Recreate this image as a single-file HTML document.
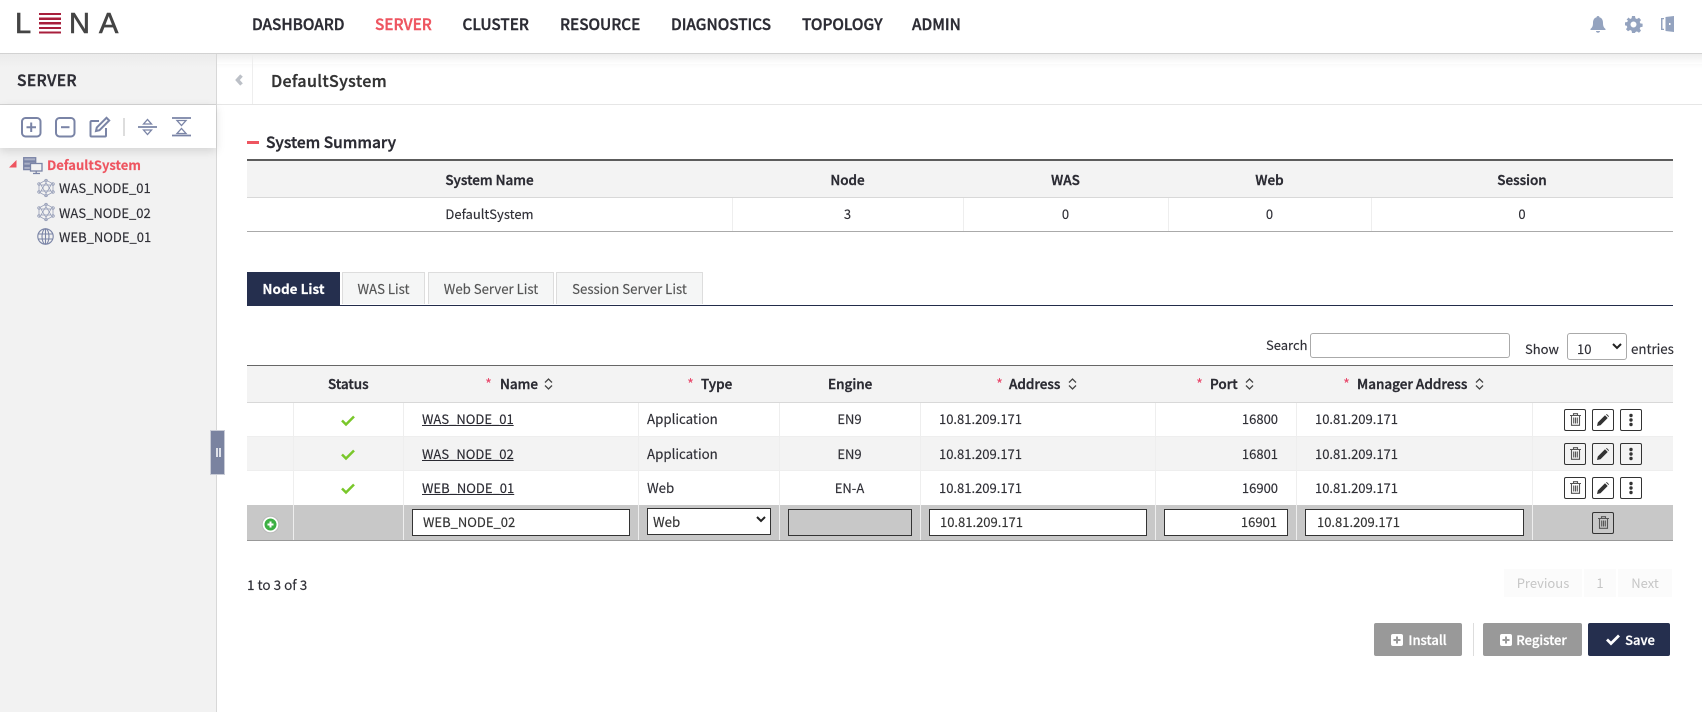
<!DOCTYPE html>
<html><head><meta charset="utf-8">
<style>
html,body{margin:0;padding:0;width:1702px;height:712px;overflow:hidden;background:#fff}
body{font-family:"Noto Sans CJK KR","Liberation Sans",sans-serif;font-size:13px;color:#2f2f36;position:relative;-webkit-text-stroke:.15px}
.a{position:absolute}
.t{position:absolute;white-space:nowrap;line-height:20px}
.c{text-align:center}
.b{font-weight:500;color:#2b2b33;font-size:13.5px;-webkit-text-stroke:.4px}
.nav{position:absolute;top:13px;font-size:15.3px;font-weight:500;color:#2c2c34;line-height:22px;white-space:nowrap;-webkit-text-stroke:.4px}
.vl{position:absolute;width:1px;background:#eee}
.tab{position:absolute;top:272px;height:31px;border:1px solid #ddd;border-bottom:0;background:#f5f6f6;text-align:center;line-height:31px;color:#555;box-sizing:content-box;font-size:13.2px}
.inp{position:absolute;box-sizing:border-box;background:#fff;border:1.5px solid #333;height:27px;line-height:23px;padding-left:10px;color:#333}
.ib{position:absolute;width:22px;height:22px;border:1px solid #333;border-radius:2px;box-sizing:border-box;background:transparent}
.btn{position:absolute;top:623px;height:33px;border-radius:2px;background:#999;color:#fff;font-weight:500;line-height:33px;text-align:center;white-space:nowrap;-webkit-text-stroke:.3px}
.pg{position:absolute;top:569px;height:28px;background:#fbfbfb;color:#c6c6c6;text-align:center;line-height:28px;-webkit-text-stroke:0}
a{color:#2b2b33;text-decoration:underline}
.star{color:#e8476a;font-size:15px;position:absolute;line-height:20px;top:375px;-webkit-text-stroke:0}
svg{position:absolute;display:block;overflow:visible}
.logo{position:absolute;top:5px;font-size:29px;line-height:38px;color:#444;font-family:'Liberation Sans',sans-serif;-webkit-text-stroke:.6px}
</style></head><body>

<!-- sidebar -->
<div class="a" style="left:0;top:54px;width:216px;height:658px;background:#f2f2f2;border-right:1px solid #d8d8d8"></div>
<div class="a" style="left:0;top:54px;width:1702px;height:14px;background:linear-gradient(#ebebeb,rgba(255,255,255,0))"></div>
<div class="a" style="left:217px;top:54px;width:1485px;height:10px;background:linear-gradient(#ededed,#fff)"></div>
<div class="a" style="left:0;top:104px;width:1702px;height:1px;background:#e6e6e6"></div>
<div class="a" style="left:0;top:104px;width:216px;height:1px;background:#d4d4d4"></div>
<div class="a" style="left:216px;top:54px;width:1px;height:658px;background:#d8d8d8"></div>
<div class="a" style="left:0;top:105px;width:216px;height:43px;background:#fff;box-shadow:0 3px 9px rgba(0,0,0,.13)"></div>

<!-- header -->
<div class="a" style="left:0;top:0;width:1702px;height:54px;background:#fff;border-bottom:1px solid #d2d2d2;box-sizing:border-box"></div>
<div class="logo" style="left:15px">L</div>
<div class="a" style="left:39px;top:13px;width:22px;height:21px;background:repeating-linear-gradient(#a81f3c 0,#a81f3c 2.2px,#fff 2.2px,#fff 4.6px)"></div>
<div class="logo" style="left:69px">N</div>
<div class="logo" style="left:99px">A</div>

<div class="nav" style="left:252px">DASHBOARD</div>
<div class="nav" style="left:375px;color:#ee5560">SERVER</div>
<div class="nav" style="left:462.500px">CLUSTER</div>
<div class="nav" style="left:560px">RESOURCE</div>
<div class="nav" style="left:671px">DIAGNOSTICS</div>
<div class="nav" style="left:802px">TOPOLOGY</div>
<div class="nav" style="left:912px">ADMIN</div>

<svg style="left:1590px;top:16px" width="16" height="17" viewBox="0 0 16 17"><path d="M8 0c1 0 1.400.6 1.400 1.300C12 2 13 4.200 13 7c0 3 .8 4.500 2.500 6v1H.5v-1C2.200 11.500 3 10 3 7c0-2.800 1-5 3.600-5.700C6.600.6 7 0 8 0zM6 15h4c0 1-.9 1.800-2 1.800S6 16 6 15z" fill="#94a3bf"/></svg>
<svg style="left:1625px;top:16px" width="17" height="17" viewBox="0 0 17 17"><path fill-rule="evenodd" d="M7 0h3l.4 2.300 1.500.7L14 1.800l2 2.200-1.300 1.900.6 1.500 2.300.4v3l-2.300.4-.6 1.500 1.300 1.900-2 2.100-2.100-1.300-1.500.7L10 17H7l-.4-2.300-1.500-.7L3 15.300l-2-2.100 1.300-1.900-.6-1.500L0 9.400v-3l2.300-.4.6-1.500L1.600 3.600 3.600 1.500 5.100 3l1.500-.7zM8.500 5.500a3 3 0 100 6 3 3 0 000-6z" fill="#94a3bf"/></svg>
<svg style="left:1661px;top:16px" width="13" height="16" viewBox="0 0 13 16"><path d="M0 2h3v1.300H1.500v9.400H3V14H0z" fill="#94a3bf"/><path fill-rule="evenodd" d="M4.500 1L13 0v16l-8.500-1zM8 7v2h1.500V7z" fill="#94a3bf"/></svg>

<!-- sidebar content -->
<div class="t" style="left:17px;top:70px;font-size:15.500px;font-weight:500;color:#2e2e36;letter-spacing:.4px;-webkit-text-stroke:.4px">SERVER</div>

<svg style="left:21px;top:117px" width="21" height="21" viewBox="0 0 21 21" fill="none" stroke="#7a84a6" stroke-width="2"><rect x="1" y="1" width="18.500" height="18.500" rx="3.500"/><path d="M10.200 5.500v9.500M5.500 10.200h9.500"/></svg>
<svg style="left:55px;top:117px" width="21" height="21" viewBox="0 0 21 21" fill="none" stroke="#7a84a6" stroke-width="2"><rect x="1" y="1" width="18.500" height="18.500" rx="3.500"/><path d="M6 10.200h8.500"/></svg>
<svg style="left:89px;top:116px" width="22" height="22" viewBox="0 0 22 22" fill="none" stroke="#7a84a6" stroke-width="2"><path d="M17 12v7.500a1 1 0 01-1 1H2.500a1 1 0 01-1-1V6a1 1 0 011-1H10"/><path d="M7 15l.8-3.500L17.500 1.800l2.700 2.700-9.700 9.700z"/></svg>
<div class="a" style="left:123px;top:118px;width:2px;height:18px;background:#ddd"></div>
<svg style="left:138px;top:118px" width="20" height="18" viewBox="0 0 20 18" fill="none" stroke="#7a84a6" stroke-width="1.300"><path d="M0 9h19" stroke-width="1.700"/><path d="M5.500 6l4-4.500 4 4.500zM5.500 12l4 4.500 4-4.500z"/></svg>
<svg style="left:172px;top:117px" width="20" height="20" viewBox="0 0 20 20" fill="none" stroke="#7a84a6" stroke-width="1.300"><path d="M0 1h19M0 18.500h19" stroke-width="1.800"/><path d="M5 3.500h9l-4.500 5zM5 16.500h9l-4.500-5z"/></svg>

<svg style="left:9px;top:160px" width="8" height="8" viewBox="0 0 8 8"><path d="M7.500 0v7.500H0z" fill="#ee5560"/></svg>
<svg style="left:23px;top:157px" width="20" height="17" viewBox="0 0 20 17" fill="none" stroke="#7a84a6" stroke-width="1.300"><rect x=".7" y=".7" width="12" height="3.300" fill="#aab0c6"/><rect x=".7" y="5" width="12" height="3.300" fill="#aab0c6"/><rect x=".7" y="9.300" width="8" height="3.300" fill="#aab0c6"/><rect x="7.500" y="6.500" width="11.500" height="7.500" fill="#f2f2f2"/><path d="M10 16.500h7M13.200 14v2.500"/></svg>
<div class="t" style="left:47px;top:155px;font-weight:700;color:#ee5560;font-size:13px">DefaultSystem</div>

<svg style="left:37px;top:179px" width="18" height="18" viewBox="0 0 18 18" fill="none" stroke="#8a93b0" stroke-width=".7"><path d="M9 1l7 4v8l-7 4-7-4V5zM9 3.500L14 12H4zM9 14.500L4 6h10z"/><circle cx="9" cy="1.500" r="1.300"/><circle cx="9" cy="16.500" r="1.300"/><circle cx="2" cy="5" r="1.300"/><circle cx="16" cy="5" r="1.300"/><circle cx="2" cy="13" r="1.300"/><circle cx="16" cy="13" r="1.300"/></svg>
<div class="t" style="left:59px;top:178px">WAS_NODE_01</div>
<svg style="left:37px;top:203px" width="18" height="18" viewBox="0 0 18 18" fill="none" stroke="#8a93b0" stroke-width=".7"><path d="M9 1l7 4v8l-7 4-7-4V5zM9 3.500L14 12H4zM9 14.500L4 6h10z"/><circle cx="9" cy="1.500" r="1.300"/><circle cx="9" cy="16.500" r="1.300"/><circle cx="2" cy="5" r="1.300"/><circle cx="16" cy="5" r="1.300"/><circle cx="2" cy="13" r="1.300"/><circle cx="16" cy="13" r="1.300"/></svg>
<div class="t" style="left:59px;top:203px">WAS_NODE_02</div>
<svg style="left:37px;top:228px" width="17" height="17" viewBox="0 0 17 17" fill="none" stroke="#7a84a6" stroke-width="1.100"><circle cx="8.500" cy="8.500" r="7.700"/><ellipse cx="8.500" cy="8.500" rx="3.500" ry="7.700"/><path d="M1 6h15M1 11h15M8.500 1v15"/></svg>
<div class="t" style="left:59px;top:227px">WEB_NODE_01</div>

<!-- handle -->
<div class="a" style="left:210px;top:430px;width:15px;height:45px;background:#7a83a0;border:1px solid #c9ccd6;box-sizing:border-box"></div>
<div class="a" style="left:216px;top:448px;width:1.500px;height:9px;background:#dfe2ea"></div>
<div class="a" style="left:219px;top:448px;width:1.500px;height:9px;background:#dfe2ea"></div>

<!-- content top -->
<div class="a" style="left:252px;top:55px;width:1px;height:49px;background:#eee"></div>
<svg style="left:235px;top:74px" width="8" height="12" viewBox="0 0 8 12"><path d="M6.500 1.500L2.500 6l4 4.500" fill="none" stroke="#bcc0c7" stroke-width="3.500"/></svg>
<div class="t" style="left:271px;top:70px;font-size:16px;font-weight:500;letter-spacing:.35px;color:#333;-webkit-text-stroke:.35px">DefaultSystem</div>

<div class="a" style="left:247px;top:141px;width:12px;height:3px;background:#ee5560"></div>
<div class="t" style="left:266px;top:132px;font-size:15.500px;font-weight:500;color:#2b2b33;-webkit-text-stroke:.4px">System Summary</div>

<!-- summary table -->
<div class="a" style="left:247px;top:159px;width:1426px;height:2px;background:#5c5c5c"></div>
<div class="a" style="left:247px;top:161px;width:1426px;height:36px;background:#f3f3f3"></div>
<div class="a" style="left:247px;top:197px;width:1426px;height:1px;background:#d8d8d8"></div>
<div class="a" style="left:247px;top:231px;width:1426px;height:1px;background:#aaa"></div>
<div class="vl" style="left:732px;top:198px;height:33px"></div>
<div class="vl" style="left:963px;top:198px;height:33px"></div>
<div class="vl" style="left:1168px;top:198px;height:33px"></div>
<div class="vl" style="left:1371px;top:198px;height:33px"></div>
<div class="t c b" style="left:247px;width:485px;top:169px">System Name</div>
<div class="t c b" style="left:732px;width:231px;top:169px">Node</div>
<div class="t c b" style="left:963px;width:205px;top:169px">WAS</div>
<div class="t c b" style="left:1168px;width:203px;top:169px">Web</div>
<div class="t c b" style="left:1371px;width:302px;top:169px">Session</div>
<div class="t c" style="left:247px;width:485px;top:204px">DefaultSystem</div>
<div class="t c" style="left:732px;width:231px;top:204px">3</div>
<div class="t c" style="left:963px;width:205px;top:204px">0</div>
<div class="t c" style="left:1168px;width:203px;top:204px">0</div>
<div class="t c" style="left:1371px;width:302px;top:204px">0</div>

<!-- tabs -->
<div class="a" style="left:247px;top:305px;width:1426px;height:1px;background:#222c4a"></div>
<div class="a" style="left:247px;top:272px;width:93px;height:34px;background:#252f4e;color:#fff;font-weight:700;text-align:center;line-height:33px;font-size:13.500px">Node List</div>
<div class="tab" style="left:342px;width:81px">WAS List</div>
<div class="tab" style="left:428px;width:124px">Web Server List</div>
<div class="tab" style="left:556px;width:145px">Session Server List</div>

<!-- search -->
<div class="t" style="left:1266px;top:335px">Search</div>
<div class="a" style="left:1310px;top:333px;width:200px;height:25px;border:1px solid #aaa;border-radius:3px;box-sizing:border-box;background:#fff"></div>
<div class="t" style="left:1525px;top:339px">Show</div>
<div class="a" style="left:1567px;top:333px;width:60px;height:27px;border:1px solid #aaa;border-radius:3px;box-sizing:border-box;background:#fff"></div>
<div class="t" style="left:1577px;top:339px">10</div>
<svg style="left:1612px;top:343px" width="10" height="7" viewBox="0 0 10 7"><path d="M1 1l4 4 4-4" fill="none" stroke="#222" stroke-width="2"/></svg>
<div class="t" style="left:1631px;top:339px;font-size:13.300px">entries</div>

<!-- main table -->
<div class="a" style="left:247px;top:365px;width:1426px;height:1px;background:#666"></div>
<div class="a" style="left:247px;top:366px;width:1426px;height:36px;background:#f3f3f3"></div>
<div class="a" style="left:247px;top:402px;width:1426px;height:1px;background:#d8d8d8"></div>
<div class="a" style="left:247px;top:437px;width:1426px;height:33px;background:#f3f3f3"></div>
<div class="a" style="left:247px;top:436px;width:1426px;height:1px;background:#eee"></div>
<div class="a" style="left:247px;top:470px;width:1426px;height:1px;background:#eee"></div>
<div class="a" style="left:247px;top:505px;width:1426px;height:35px;background:#c8c8c8"></div>
<div class="a" style="left:247px;top:540px;width:1426px;height:1px;background:#999"></div>
<div class="vl" style="left:293px;top:403px;height:137px"></div>
<div class="vl" style="left:403px;top:403px;height:137px"></div>
<div class="vl" style="left:638px;top:403px;height:137px"></div>
<div class="vl" style="left:779px;top:403px;height:137px"></div>
<div class="vl" style="left:920px;top:403px;height:137px"></div>
<div class="vl" style="left:1155px;top:403px;height:137px"></div>
<div class="vl" style="left:1296px;top:403px;height:137px"></div>
<div class="vl" style="left:1532px;top:403px;height:137px"></div>

<!-- header cells -->
<div class="t b" style="left:328px;top:373px">Status</div>
<div class="star" style="left:485px">*</div><div class="t b" style="left:500px;top:373px">Name</div>
<svg style="left:544px;top:378px" width="9" height="12" viewBox="0 0 9 12" fill="none" stroke="#444" stroke-width="1.300"><path d="M1 4.500L4.500 1 8 4.500M1 7.500L4.500 11 8 7.500"/></svg>
<div class="star" style="left:687px">*</div><div class="t b" style="left:701px;top:373px">Type</div>
<div class="t b" style="left:828px;top:373px">Engine</div>
<div class="star" style="left:996px">*</div><div class="t b" style="left:1009px;top:373px">Address</div>
<svg style="left:1068px;top:378px" width="9" height="12" viewBox="0 0 9 12" fill="none" stroke="#444" stroke-width="1.300"><path d="M1 4.500L4.500 1 8 4.500M1 7.500L4.500 11 8 7.500"/></svg>
<div class="star" style="left:1196px">*</div><div class="t b" style="left:1210px;top:373px">Port</div>
<svg style="left:1245px;top:378px" width="9" height="12" viewBox="0 0 9 12" fill="none" stroke="#444" stroke-width="1.300"><path d="M1 4.500L4.500 1 8 4.500M1 7.500L4.500 11 8 7.500"/></svg>
<div class="star" style="left:1343px">*</div><div class="t b" style="left:1357px;top:373px">Manager Address</div>
<svg style="left:1475px;top:378px" width="9" height="12" viewBox="0 0 9 12" fill="none" stroke="#444" stroke-width="1.300"><path d="M1 4.500L4.500 1 8 4.500M1 7.500L4.500 11 8 7.500"/></svg>

<!-- rows -->
<svg style="left:341px;top:415px" width="14" height="11" viewBox="0 0 14 11"><path d="M1 5.500l4 4L13 1.500" fill="none" stroke="#79c72a" stroke-width="2.500"/></svg>
<svg style="left:341px;top:449px" width="14" height="11" viewBox="0 0 14 11"><path d="M1 5.500l4 4L13 1.500" fill="none" stroke="#79c72a" stroke-width="2.500"/></svg>
<svg style="left:341px;top:483px" width="14" height="11" viewBox="0 0 14 11"><path d="M1 5.500l4 4L13 1.500" fill="none" stroke="#79c72a" stroke-width="2.500"/></svg>

<div class="t" style="left:422px;top:409px"><a>WAS_NODE_01</a></div>
<div class="t" style="left:422px;top:444px"><a>WAS_NODE_02</a></div>
<div class="t" style="left:422px;top:478px"><a>WEB_NODE_01</a></div>
<div class="t" style="left:647px;top:409px;font-size:13.300px">Application</div>
<div class="t" style="left:647px;top:444px;font-size:13.300px">Application</div>
<div class="t" style="left:647px;top:478px;font-size:13.300px">Web</div>
<div class="t c" style="left:779px;width:141px;top:409px">EN9</div>
<div class="t c" style="left:779px;width:141px;top:444px">EN9</div>
<div class="t c" style="left:779px;width:141px;top:478px">EN-A</div>
<div class="t" style="left:939px;top:409px">10.81.209.171</div>
<div class="t" style="left:939px;top:444px">10.81.209.171</div>
<div class="t" style="left:939px;top:478px">10.81.209.171</div>
<div class="t" style="left:1200px;width:78px;text-align:right;top:409px">16800</div>
<div class="t" style="left:1200px;width:78px;text-align:right;top:444px">16801</div>
<div class="t" style="left:1200px;width:78px;text-align:right;top:478px">16900</div>
<div class="t" style="left:1315px;top:409px">10.81.209.171</div>
<div class="t" style="left:1315px;top:444px">10.81.209.171</div>
<div class="t" style="left:1315px;top:478px">10.81.209.171</div>

<!-- action buttons row1 -->
<div class="ib" style="left:1564px;top:409px"></div>
<svg style="left:1569.500px;top:413px" width="11" height="13" viewBox="0 0 11 13" fill="none" stroke="#555" stroke-width="1.100"><path d="M0 2.500h11M3.500 2.500V.7h4v1.800M1.500 2.500v9.800h8v-9.800M3.700 4.500v6M5.500 4.500v6M7.300 4.500v6"/></svg>
<div class="ib" style="left:1592px;top:409px"></div>
<svg style="left:1597px;top:414px" width="12" height="12" viewBox="0 0 12 12"><path d="M0 12l.8-3.500L8 1.300l2.700 2.700-7.200 7.200zM9 .5l.8-.5L12 2.200l-.5.8z" fill="#333"/></svg>
<div class="ib" style="left:1620px;top:409px"></div>
<svg style="left:1629px;top:414px" width="4" height="12" viewBox="0 0 4 12" fill="#333"><circle cx="2" cy="1.500" r="1.700"/><circle cx="2" cy="6" r="1.700"/><circle cx="2" cy="10.500" r="1.700"/></svg>

<div class="ib" style="left:1564px;top:443px"></div>
<svg style="left:1569.500px;top:447px" width="11" height="13" viewBox="0 0 11 13" fill="none" stroke="#555" stroke-width="1.100"><path d="M0 2.500h11M3.500 2.500V.7h4v1.800M1.500 2.500v9.800h8v-9.800M3.700 4.500v6M5.500 4.500v6M7.300 4.500v6"/></svg>
<div class="ib" style="left:1592px;top:443px"></div>
<svg style="left:1597px;top:448px" width="12" height="12" viewBox="0 0 12 12"><path d="M0 12l.8-3.500L8 1.300l2.700 2.700-7.200 7.200zM9 .5l.8-.5L12 2.200l-.5.8z" fill="#333"/></svg>
<div class="ib" style="left:1620px;top:443px"></div>
<svg style="left:1629px;top:448px" width="4" height="12" viewBox="0 0 4 12" fill="#333"><circle cx="2" cy="1.500" r="1.700"/><circle cx="2" cy="6" r="1.700"/><circle cx="2" cy="10.500" r="1.700"/></svg>

<div class="ib" style="left:1564px;top:477px"></div>
<svg style="left:1569.500px;top:481px" width="11" height="13" viewBox="0 0 11 13" fill="none" stroke="#555" stroke-width="1.100"><path d="M0 2.500h11M3.500 2.500V.7h4v1.800M1.500 2.500v9.800h8v-9.800M3.700 4.500v6M5.500 4.500v6M7.300 4.500v6"/></svg>
<div class="ib" style="left:1592px;top:477px"></div>
<svg style="left:1597px;top:482px" width="12" height="12" viewBox="0 0 12 12"><path d="M0 12l.8-3.500L8 1.300l2.700 2.700-7.200 7.200zM9 .5l.8-.5L12 2.200l-.5.8z" fill="#333"/></svg>
<div class="ib" style="left:1620px;top:477px"></div>
<svg style="left:1629px;top:482px" width="4" height="12" viewBox="0 0 4 12" fill="#333"><circle cx="2" cy="1.500" r="1.700"/><circle cx="2" cy="6" r="1.700"/><circle cx="2" cy="10.500" r="1.700"/></svg>

<!-- edit row -->
<svg style="left:262px;top:515.500px" width="17" height="17" viewBox="0 0 17 17"><circle cx="8.500" cy="8.500" r="8.300" fill="#fff" stroke="#bbb"/><circle cx="8.500" cy="8.500" r="6" fill="#3cb043"/><path d="M8.500 5.500v6M5.500 8.500h6" stroke="#fff" stroke-width="2"/></svg>
<div class="inp" style="left:412px;top:509px;width:218px">WEB_NODE_02</div>
<div class="inp" style="left:647px;top:508px;width:124px;padding-left:5px;line-height:26px;font-size:13.300px">Web</div>
<svg style="left:756px;top:516px" width="10" height="7" viewBox="0 0 10 7"><path d="M1 1l4 4 4-4" fill="none" stroke="#222" stroke-width="2"/></svg>
<div class="inp" style="left:788px;top:509px;width:124px;background:#c8c8c8"></div>
<div class="inp" style="left:929px;top:509px;width:218px">10.81.209.171</div>
<div class="inp" style="left:1164px;top:509px;width:124px;text-align:right;padding-right:10px;padding-left:0">16901</div>
<div class="inp" style="left:1305px;top:509px;width:219px;padding-left:11px">10.81.209.171</div>
<div class="ib" style="left:1592px;top:512px"></div>
<svg style="left:1597.500px;top:516px" width="11" height="13" viewBox="0 0 11 13" fill="none" stroke="#555" stroke-width="1.100"><path d="M0 2.500h11M3.500 2.500V.7h4v1.800M1.500 2.500v9.800h8v-9.800M3.700 4.500v6M5.500 4.500v6M7.300 4.500v6"/></svg>

<!-- footer -->
<div class="t" style="left:247px;top:574px;font-size:13.500px">1 to 3 of 3</div>
<div class="pg" style="left:1504px;width:78px">Previous</div>
<div class="pg" style="left:1584px;width:32px">1</div>
<div class="pg" style="left:1618px;width:54px">Next</div>

<div class="btn" style="left:1374px;width:88px;padding-left:19px;box-sizing:border-box">Install</div>
<svg style="left:1391px;top:634px" width="12" height="12" viewBox="0 0 12 12"><rect width="12" height="12" rx="2" fill="#fff"/><path d="M6 2.500v7M2.500 6h7" stroke="#999" stroke-width="2"/></svg>
<div class="a" style="left:1473px;top:623px;width:1px;height:33px;background:#ddd"></div>
<div class="btn" style="left:1483px;width:99px;padding-left:18px;box-sizing:border-box">Register</div>
<svg style="left:1500px;top:634px" width="12" height="12" viewBox="0 0 12 12"><rect width="12" height="12" rx="2" fill="#fff"/><path d="M6 2.500v7M2.500 6h7" stroke="#999" stroke-width="2"/></svg>
<div class="btn" style="left:1588px;width:82px;background:#252f4e;padding-left:22px;box-sizing:border-box">Save</div>
<svg style="left:1606px;top:634px" width="14" height="11" viewBox="0 0 14 11"><path d="M1 5.500l4 4L13 1.500" fill="none" stroke="#fff" stroke-width="2.800"/></svg>

</body></html>
